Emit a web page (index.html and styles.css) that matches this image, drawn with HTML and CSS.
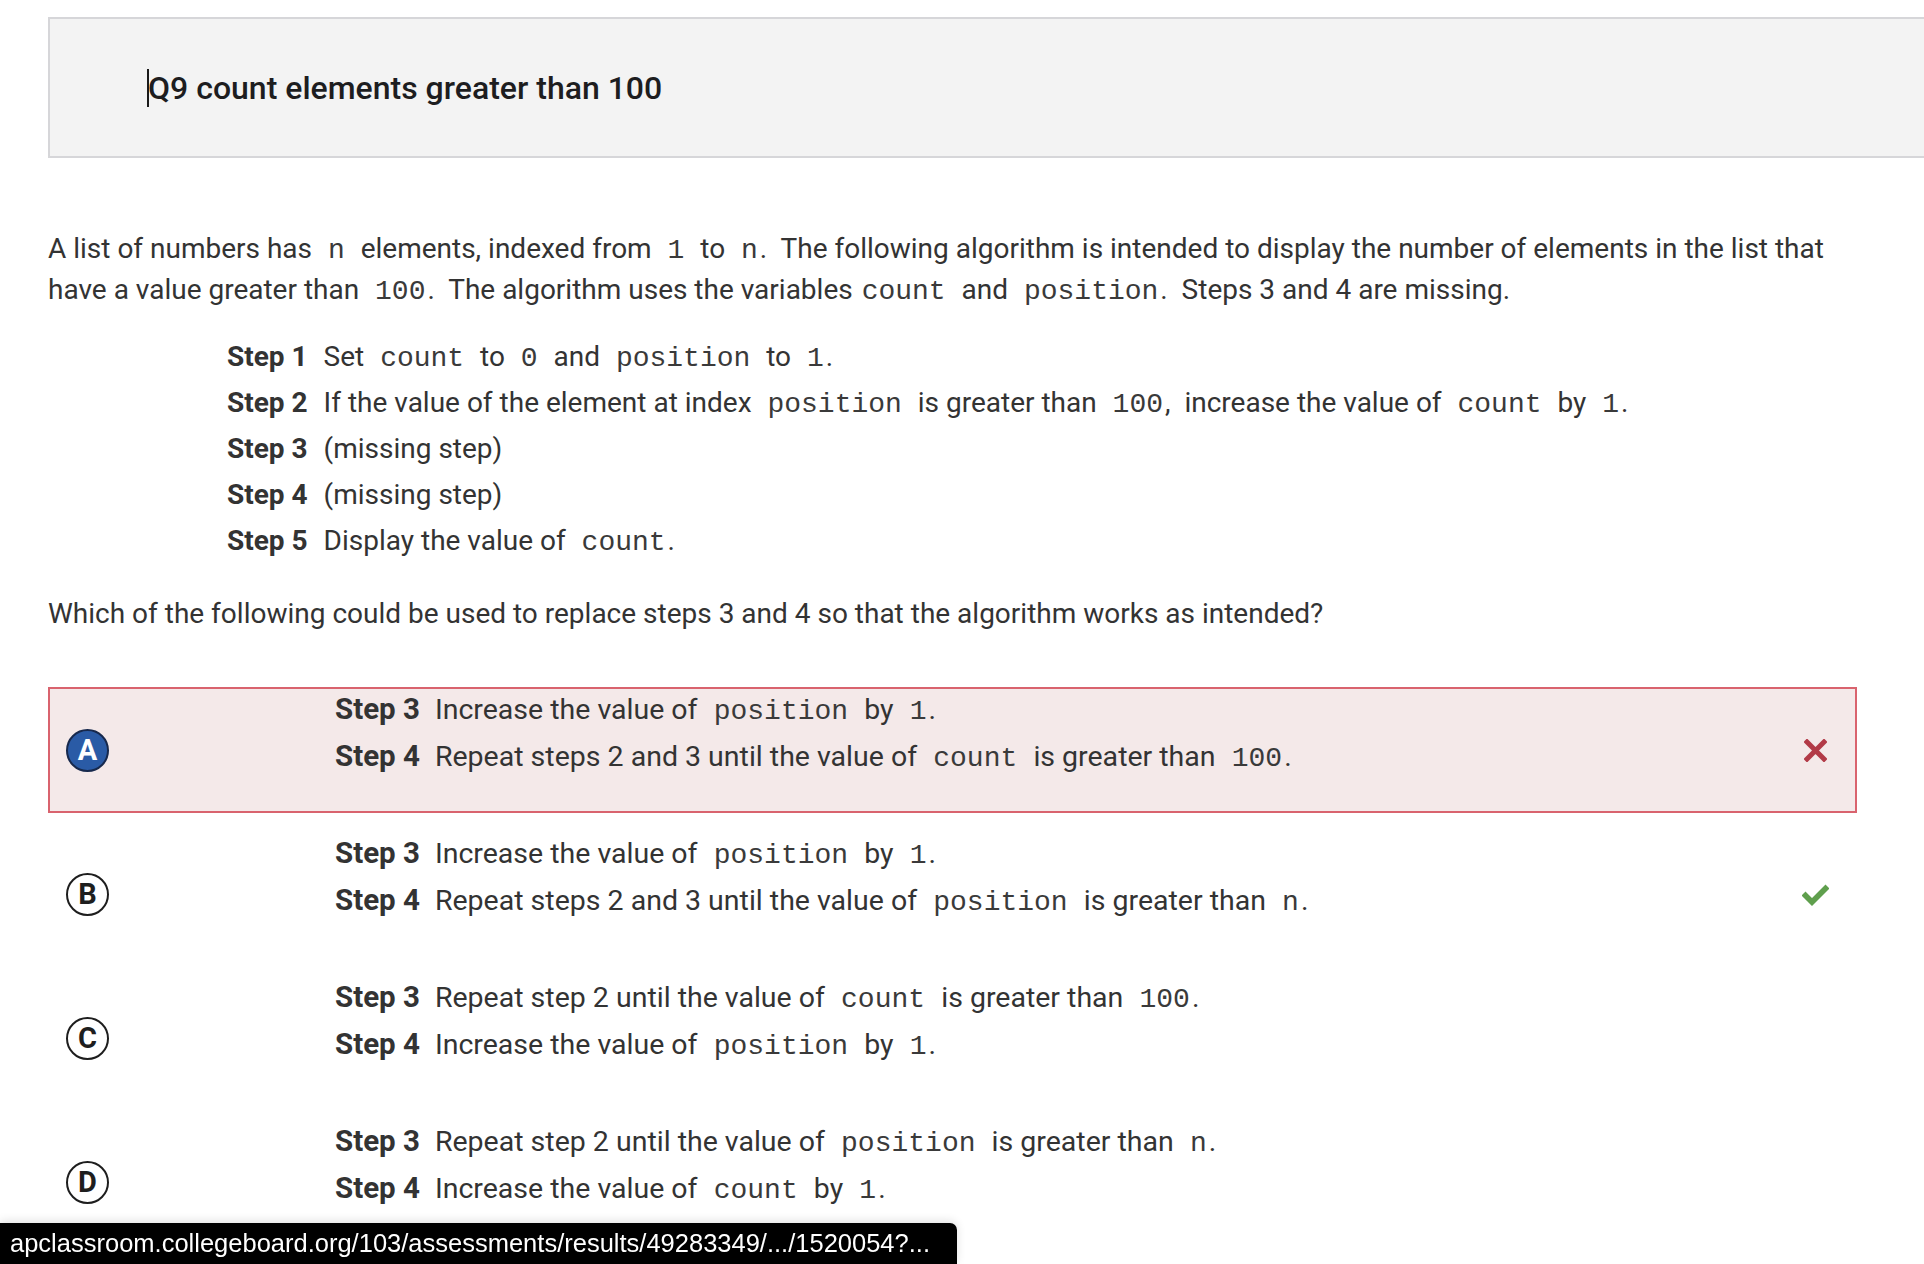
FILE: index.html
```html
<!DOCTYPE html>
<html lang="en">
<head>
<meta charset="utf-8">
<title>Q9 count elements greater than 100</title>
<link rel="stylesheet" href="styles.css">
</head>
<body>
<div class="page">
  <div class="qhead">
    <span class="caret"></span><h1 class="qtitle">Q9 count elements greater than 100</h1>
  </div>

  <div class="content">
    <p class="stem">A list of numbers has&nbsp; <code>n</code>&nbsp; elements, indexed from&nbsp; <code>1</code>&nbsp; to&nbsp; <code>n</code>.&nbsp; The following algorithm is intended to display the number of elements in the list that<br>have a value greater than&nbsp; <code>100</code>.&nbsp; The algorithm uses the variables <code>count</code>&nbsp; and&nbsp; <code>position</code>.&nbsp; Steps 3 and 4 are missing.</p>

    <div class="steps">
      <div class="step"><b class="label">Step 1</b><span class="txt">Set&nbsp; <code>count</code>&nbsp; to&nbsp; <code>0</code>&nbsp; and&nbsp; <code>position</code>&nbsp; to&nbsp; <code>1</code>.</span></div>
      <div class="step"><b class="label">Step 2</b><span class="txt">If the value of the element at index&nbsp; <code>position</code>&nbsp; is greater than&nbsp; <code>100</code>,&nbsp; increase the value of&nbsp; <code>count</code>&nbsp; by&nbsp; <code>1</code>.</span></div>
      <div class="step"><b class="label">Step 3</b><span class="txt">(missing step)</span></div>
      <div class="step"><b class="label">Step 4</b><span class="txt">(missing step)</span></div>
      <div class="step"><b class="label">Step 5</b><span class="txt">Display the value of&nbsp; <code>count</code>.</span></div>
    </div>

    <p class="prompt">Which of the following could be used to replace steps 3 and 4 so that the algorithm works as intended?</p>

    <div class="options">
      <div class="option wrong">
        <div class="letter selected">A</div>
        <div class="osteps">
          <div class="ostep"><b class="label">Step 3</b><span class="txt">Increase the value of&nbsp; <code>position</code>&nbsp; by&nbsp; <code>1</code>.</span></div>
          <div class="ostep"><b class="label">Step 4</b><span class="txt">Repeat steps 2 and 3 until the value of&nbsp; <code>count</code>&nbsp; is greater than&nbsp; <code>100</code>.</span></div>
        </div>
        <div class="mark">
          <svg width="23" height="23" viewBox="0 0 23 23"><path d="M3 3 L20 20 M20 3 L3 20" stroke="#b23a47" stroke-width="5" stroke-linecap="square" fill="none"/></svg>
        </div>
      </div>

      <div class="option">
        <div class="letter">B</div>
        <div class="osteps">
          <div class="ostep"><b class="label">Step 3</b><span class="txt">Increase the value of&nbsp; <code>position</code>&nbsp; by&nbsp; <code>1</code>.</span></div>
          <div class="ostep"><b class="label">Step 4</b><span class="txt">Repeat steps 2 and 3 until the value of&nbsp; <code>position</code>&nbsp; is greater than&nbsp; <code>n</code>.</span></div>
        </div>
        <div class="mark">
          <svg width="27" height="23" viewBox="0 0 27 23"><path d="M3.5 12.5 L10 19 L23.5 5.5" stroke="#5f9f4d" stroke-width="5.5" stroke-linecap="square" stroke-linejoin="miter" fill="none"/></svg>
        </div>
      </div>

      <div class="option">
        <div class="letter">C</div>
        <div class="osteps">
          <div class="ostep"><b class="label">Step 3</b><span class="txt">Repeat step 2 until the value of&nbsp; <code>count</code>&nbsp; is greater than&nbsp; <code>100</code>.</span></div>
          <div class="ostep"><b class="label">Step 4</b><span class="txt">Increase the value of&nbsp; <code>position</code>&nbsp; by&nbsp; <code>1</code>.</span></div>
        </div>
        <div class="mark"></div>
      </div>

      <div class="option">
        <div class="letter">D</div>
        <div class="osteps">
          <div class="ostep"><b class="label">Step 3</b><span class="txt">Repeat step 2 until the value of&nbsp; <code>position</code>&nbsp; is greater than&nbsp; <code>n</code>.</span></div>
          <div class="ostep"><b class="label">Step 4</b><span class="txt">Increase the value of&nbsp; <code>count</code>&nbsp; by&nbsp; <code>1</code>.</span></div>
        </div>
        <div class="mark"></div>
      </div>
    </div>
  </div>
</div>

<div class="statusbar">apclassroom.collegeboard.org/103/assessments/results/49283349/.../1520054?...</div>
</body>
</html>
```

FILE: styles.css
```css
html, body {
  margin: 0;
  padding: 0;
  background: #ffffff;
  overflow: hidden;
}

body {
  font-family: Roboto, "Noto Sans", Arial, sans-serif;
  color: #333333;
}

.page {
  padding: 17px 0 0 48px;
}

.qhead {
  box-sizing: border-box;
  width: 1920px;
  height: 141px;
  background: #f3f3f3;
  border: 2px solid #d6d6d9;
  border-right: none;
  display: flex;
  align-items: center;
  padding-left: 97px;
}

.caret {
  display: block;
  width: 2px;
  height: 38px;
  background: #1a1a1a;
  margin-right: -1px;
}

.qtitle {
  margin: 0;
  font-size: 32px;
  font-weight: 500;
  color: #1d1d1f;
  line-height: 40px;
}

.content {
  width: 1809px;
}

code {
  font-family: "Liberation Mono", "Courier New", monospace;
  font-size: 28px;
  line-height: 1;
  color: #3a3a3a;
  margin: 0 2px;
}

.stem {
  margin: 71px 0 0 0;
  font-size: 28px;
  line-height: 40.5px;
}

.steps {
  margin: 24px 0 0 179px;
  display: flex;
  flex-direction: column;
}

.step {
  display: flex;
  align-items: baseline;
  height: 46px;
  line-height: 46px;
  font-size: 28px;
}

.label {
  font-weight: 700;
  color: #333333;
  margin-right: 16px;
  white-space: nowrap;
}

.prompt {
  margin: 30px 0 0 0;
  font-size: 28px;
  line-height: 40px;
}

.options {
  margin-top: 53px;
  width: 1809px;
  display: flex;
  flex-direction: column;
  gap: 18px;
}

.option {
  box-sizing: border-box;
  height: 126px;
  border: 2px solid transparent;
  display: grid;
  grid-template-columns: 269px 1fr 27px;
  padding: 0 26px 0 16px;
}

.option.wrong {
  border-color: #d9636e;
  background: #f4e9e9;
}

.letter {
  align-self: center;
  box-sizing: border-box;
  width: 43px;
  height: 43px;
  border-radius: 50%;
  border: 2px solid #1e1e1e;
  background: #ffffff;
  color: #1e1e1e;
  font-weight: 700;
  font-size: 29px;
  display: flex;
  align-items: center;
  justify-content: center;
}

.letter.selected {
  background: #2a5ba6;
  border-color: #17294d;
  color: #ffffff;
}

.osteps {
  display: flex;
  flex-direction: column;
  gap: 7px;
}

.ostep {
  display: flex;
  align-items: baseline;
  height: 40px;
  line-height: 40px;
  font-size: 28.5px;
}

.ostep .label {
  font-size: 29.5px;
  margin-right: 15px;
}

.mark {
  align-self: center;
  display: flex;
  align-items: center;
  justify-content: center;
}

.mark svg {
  display: block;
}

.statusbar {
  position: fixed;
  left: 0;
  bottom: 0;
  box-sizing: border-box;
  width: 957px;
  height: 41px;
  background: #000000;
  color: #ffffff;
  border-top-right-radius: 7px;
  font-family: "Liberation Sans", Arial, sans-serif;
  font-size: 25.5px;
  line-height: 41px;
  padding-left: 10px;
  white-space: nowrap;
  box-shadow: 0 -2px 10px rgba(0, 0, 0, 0.12);
}
```
